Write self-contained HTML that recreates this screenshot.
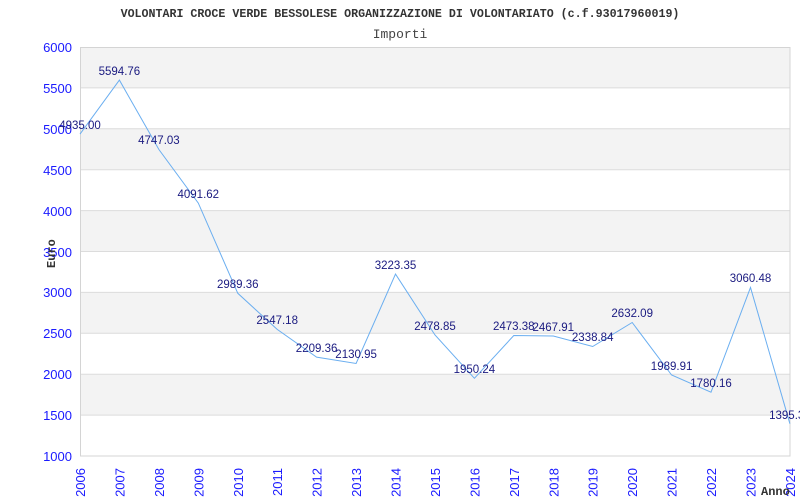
<!DOCTYPE html>
<html><head><meta charset="utf-8"><style>
html,body{margin:0;padding:0;background:#fff;}
svg{display:block;}
.lbl{font-family:"Liberation Sans",Arial,sans-serif;}
</style></head><body>
<svg width="800" height="500" xmlns="http://www.w3.org/2000/svg">
<rect width="800" height="500" fill="#fff"/>
<text x="400" y="17" text-anchor="middle" font-family="'Liberation Mono', monospace" font-weight="bold" font-size="11.65" fill="#333">VOLONTARI CROCE VERDE BESSOLESE ORGANIZZAZIONE DI VOLONTARIATO (c.f.93017960019)</text>
<text x="400" y="38" text-anchor="middle" font-family="'Liberation Mono', monospace" font-size="13" fill="#444">Importi</text>
<g fill="#f3f3f3">
<rect x="80" y="47" width="710" height="40.9"/>
<rect x="80" y="128.8" width="710" height="40.9"/>
<rect x="80" y="210.6" width="710" height="40.9"/>
<rect x="80" y="292.4" width="710" height="40.9"/>
<rect x="80" y="374.2" width="710" height="40.9"/>
</g>
<g stroke="#dcdcdc" stroke-width="1">
<line x1="80" y1="87.9" x2="790" y2="87.9"/><line x1="80" y1="128.8" x2="790" y2="128.8"/>
<line x1="80" y1="169.7" x2="790" y2="169.7"/><line x1="80" y1="210.6" x2="790" y2="210.6"/>
<line x1="80" y1="251.5" x2="790" y2="251.5"/><line x1="80" y1="292.4" x2="790" y2="292.4"/>
<line x1="80" y1="333.3" x2="790" y2="333.3"/><line x1="80" y1="374.2" x2="790" y2="374.2"/>
<line x1="80" y1="415.1" x2="790" y2="415.1"/>
</g>
<rect x="80.5" y="47.5" width="709.5" height="408.5" fill="none" stroke="#d4d4d4"/>
<g class="lbl" font-size="13" fill="#1a1aff" text-anchor="end">
<text x="72" y="52">6000</text><text x="72" y="93">5500</text><text x="72" y="134">5000</text>
<text x="72" y="175">4500</text><text x="72" y="216">4000</text><text x="72" y="257">3500</text>
<text x="72" y="297">3000</text><text x="72" y="338">2500</text><text x="72" y="379">2000</text>
<text x="72" y="420">1500</text><text x="72" y="461">1000</text>
</g>
<g class="lbl" font-size="13" fill="#1a1aff" text-anchor="end">
<text transform="translate(85,468) rotate(-90)">2006</text>
<text transform="translate(124.4,468) rotate(-90)">2007</text>
<text transform="translate(163.9,468) rotate(-90)">2008</text>
<text transform="translate(203.3,468) rotate(-90)">2009</text>
<text transform="translate(242.8,468) rotate(-90)">2010</text>
<text transform="translate(282.2,468) rotate(-90)">2011</text>
<text transform="translate(321.6,468) rotate(-90)">2012</text>
<text transform="translate(361.1,468) rotate(-90)">2013</text>
<text transform="translate(400.5,468) rotate(-90)">2014</text>
<text transform="translate(440,468) rotate(-90)">2015</text>
<text transform="translate(479.4,468) rotate(-90)">2016</text>
<text transform="translate(518.8,468) rotate(-90)">2017</text>
<text transform="translate(558.3,468) rotate(-90)">2018</text>
<text transform="translate(597.7,468) rotate(-90)">2019</text>
<text transform="translate(637.2,468) rotate(-90)">2020</text>
<text transform="translate(676.6,468) rotate(-90)">2021</text>
<text transform="translate(716,468) rotate(-90)">2022</text>
<text transform="translate(755.5,468) rotate(-90)">2023</text>
<text transform="translate(794.9,468) rotate(-90)">2024</text>
</g>
<text transform="translate(55,268) rotate(-90)" font-family="'Liberation Mono', monospace" font-weight="bold" font-size="12" fill="#333">Euro</text>
<text x="761" y="495" font-family="'Liberation Mono', monospace" font-weight="bold" font-size="12" fill="#333">Anno</text>
<polyline fill="none" stroke="#6aaef0" stroke-width="1" points="80,134.1 119.4,80.1 158.9,149.5 198.3,203.1 237.8,293.3 277.2,329.4 316.6,357.1 356.1,363.5 395.5,274.1 435,335 474.4,378.3 513.8,335.5 553.3,336 592.7,346.5 632.2,322.5 671.6,375 711,392.2 750.5,287.5 789.9,423.7"/>
<g class="lbl" font-size="11.5" fill="#1a1a80" text-anchor="middle">
<text x="80" y="129">4935.00</text>
<text x="119.4" y="75">5594.76</text>
<text x="158.9" y="144">4747.03</text>
<text x="198.3" y="198">4091.62</text>
<text x="237.8" y="288">2989.36</text>
<text x="277.2" y="324">2547.18</text>
<text x="316.6" y="352">2209.36</text>
<text x="356.1" y="358">2130.95</text>
<text x="395.5" y="269">3223.35</text>
<text x="435" y="330">2478.85</text>
<text x="474.4" y="373">1950.24</text>
<text x="513.8" y="330">2473.38</text>
<text x="553.3" y="331">2467.91</text>
<text x="592.7" y="341">2338.84</text>
<text x="632.2" y="317">2632.09</text>
<text x="671.6" y="370">1989.91</text>
<text x="711" y="387">1780.16</text>
<text x="750.5" y="282">3060.48</text>
<text x="789.9" y="419">1395.30</text>
</g>
</svg>
</body></html>
